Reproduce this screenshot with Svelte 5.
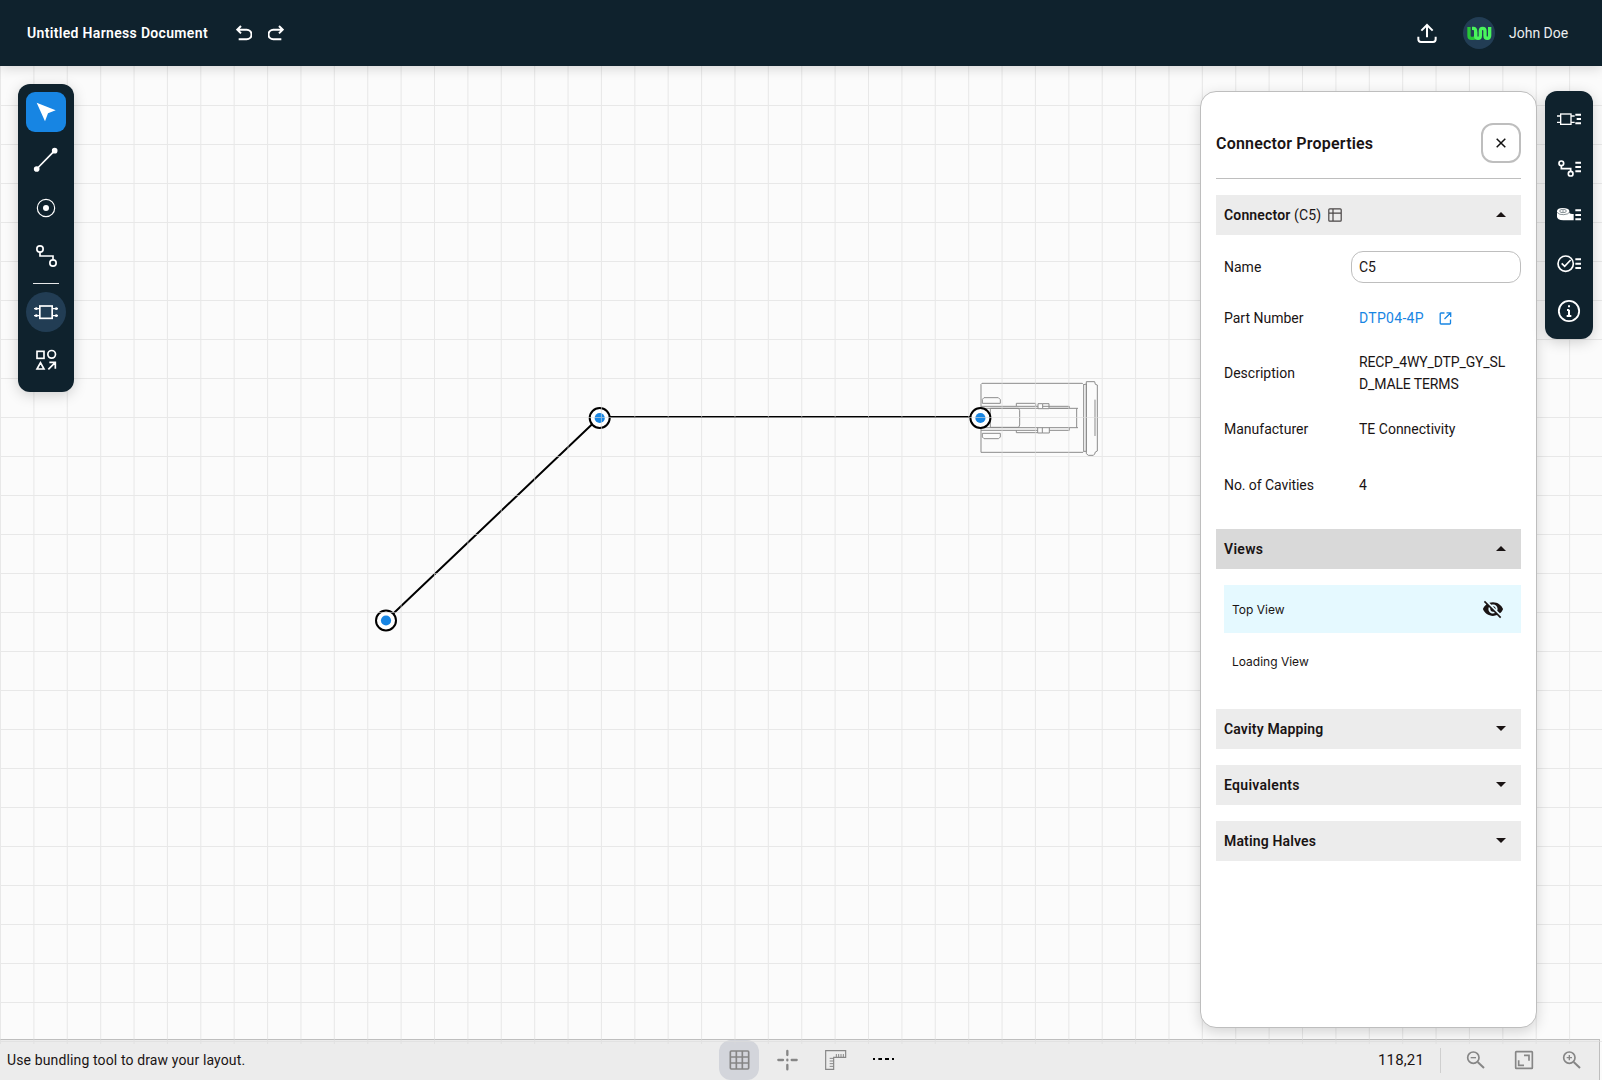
<script>
    let connectorName = "C5";
    let activeTool = "select";
    let selectedView = "Top View";

    const columns = Array.from({ length: 48 }, (_, i) => i * 33.385 + 0.5);
    const rows = Array.from({ length: 25 }, (_, i) => i * 39 + 39.5);
    const nodes = [
        { x: 386, y: 554.5 },
        { x: 599.7, y: 352 },
        { x: 980.4, y: 352 }
    ];
    const views = ["Top View", "Loading View"];
    const closedSections = [
        { title: "Cavity Mapping", kind: "cavity" },
        { title: "Equivalents", kind: "equivalents" },
        { title: "Mating Halves", kind: "mating" }
    ];
</script>

<div class="app">
    <header>
        <h1>Untitled Harness Document</h1>
        <button class="history" aria-label="Undo">
            <svg width="16" height="16" viewBox="0 0 48 48"><path d="M15 3L4 14l11 11M5 14h27a14.500 14.500 0 0 1 0 29H8" /></svg>
        </button>
        <button class="history" aria-label="Redo">
            <svg width="16" height="16" viewBox="0 0 48 48"><path d="M33 3l11 11-11 11M43 14H16a14.500 14.500 0 0 0 0 29h24" /></svg>
        </button>
        <button class="export" aria-label="Export">
            <svg width="20" height="20" viewBox="0 0 60 60"><path d="M30 43V6M13 23L30 6l17 17M4 41v8q0 8 8 8h36q8 0 8-8v-8" /></svg>
        </button>
        <svg class="avatar" width="32" height="32" viewBox="0 0 96 96">
            <circle cx="48" cy="48" r="48" fill="#223d54" />
            <path d="M18 30v26q0 8 8 8h4q8 0 8-8V45" stroke="#27c637" />
            <path d="M27 34h4q7 0 7 9v13q0 8 7 8t7-8V42q0-8 7-8t7 8v14q0 8 7 8t7-9V30" stroke="#49f55c" />
        </svg>
        <span class="user">John Doe</span>
    </header>

    <main>
        <svg class="canvas" width="1602" height="978" viewBox="0 0 1602 978">
            <g class="outline" transform="translate(960 304) scale(.33333)">
                <path d="M63 43l3-3h301l4 4v201l-2 2H63zM371 44l8-2v202h-8M379 35h25l2 8 6 2v198l-6 3-2 6-4 4h-15l-6-5zM405 89v109" />
                <path d="M67 88l5-5h43l6 6v11H67zM67 190h54v11l-5 5H72l-5-5z" />
                <path d="M63 109h171M63 115h171M248 109h80v6h-60M63 181h171M63 173h291M268 181h60v-8M91 115h85l3 7v43l-3 7H91zM354 115h-86M350 115v58" />
                <path d="M169 108v-8h58v8M169 181v7h64M234 101h14v15h-14zM248 101h19v15h-19M233 173v16h14v-16M247 189h21v-16" />
            </g>
            <path class="wire" d="M386 554.500L599.700 351H980" />
            {#each nodes as node}
                <circle class="node" cx={node.x} cy={node.y} r="10" />
                <circle cx={node.x} cy={node.y} r="5.100" fill="#1785e3" />
            {/each}
            <g class="grid">
                {#each columns as x}
                    <line x1={x} x2={x} y1="0" y2="978" />
                {/each}
                {#each rows as y}
                    <line x1="0" x2="1602" y1={y} y2={y} />
                {/each}
            </g>
        </svg>

        <nav class="tools">
            <button class:active={activeTool === "select"} on:click={() => activeTool = "select"} aria-label="Select">
                <svg viewBox="0 0 120 120"><path class="solid" d="M32 32l57 23-23 9-9 24z" /></svg>
            </button>
            <button aria-label="Line">
                <svg viewBox="0 0 120 120"><path d="M32 87l54-55" /><circle class="solid" cx="32" cy="87" r="8.500" /><circle class="solid" cx="86" cy="32" r="8.500" /></svg>
            </button>
            <button aria-label="Node">
                <svg viewBox="0 0 120 120"><circle cx="60" cy="60" r="26" stroke-width="3.500" /><circle class="solid" cx="60" cy="60" r="9" /></svg>
            </button>
            <button aria-label="Bundle">
                <svg viewBox="0 0 120 120"><path d="M42 49v11h39v11" /><circle cx="42" cy="39" r="9.500" /><circle cx="81" cy="81" r="9.500" /></svg>
            </button>
            <hr />
            <button class="round" aria-label="Connector">
                <svg viewBox="0 0 120 120">
                    <rect x="41.500" y="42" width="37" height="37" />
                    <path stroke-width="3.500" d="M24 50h17M24 71h17M79 50h17M79 71h17" />
                    <g class="solid"><circle cx="31" cy="50" r="4" /><circle cx="31" cy="71" r="4" /><circle cx="91" cy="50" r="4" /><circle cx="91" cy="71" r="4" /></g>
                </svg>
            </button>
            <button aria-label="Components">
                <svg viewBox="0 0 120 120"><rect x="33" y="34" width="21" height="21" /><circle cx="77" cy="43" r="11.500" /><path d="M43.500 68L33 87h21zM67 88l21-21M70 67h18v19" /></svg>
            </button>
        </nav>

        <section class="panel">
            <div class="panel-head">
                <h2>Connector Properties</h2>
                <button class="close" aria-label="Close"><svg width="10" height="10" viewBox="0 0 10 10"><path d="M.7.700l8.600 8.600M9.300.7L.7 9.300" /></svg></button>
            </div>

            <div class="section-head">
                <h3 class="connector">Connector <span>(C5)</span></h3>
                <svg class="table" width="14" height="14" viewBox="0 0 14 14"><rect x=".8" y=".8" width="12.400" height="12.400" rx="1" /><path d="M5 1v12M1 5.200h12" /></svg>
                <svg class="caret" width="10" height="5" viewBox="0 0 10 5"><path d="M0 5l5-5 5 5z" /></svg>
            </div>
            <dl>
                <dt>Name</dt>
                <dd class="field"><input bind:value={connectorName} /></dd>
                <dt>Part Number</dt>
                <dd class="link">
                    <span class="part">DTP04-4P</span>
                    <svg width="13" height="13" viewBox="0 0 12 13"><path d="M5 1H1.500Q.7 1 .7 1.800v9.400q0 .8.800.800h8.700q.8 0 .8-.8V7.500M7 .8h4.200V5M11 1L5 7" /></svg>
                </dd>
                <dt>Description</dt>
                <dd class="desc">RECP_4WY_DTP_GY_SLD_MALE TERMS</dd>
                <dt>Manufacturer</dt>
                <dd>TE Connectivity</dd>
                <dt class="cavities">No. of Cavities</dt>
                <dd>4</dd>
            </dl>

            <div class="section-head dark">
                <h3>Views</h3>
                <svg class="caret" width="10" height="5" viewBox="0 0 10 5"><path d="M0 5l5-5 5 5z" /></svg>
            </div>
            <ul>
                {#each views as view}
                    <li class:selected={view === selectedView}>
                        {view}
                        {#if view === selectedView}
                            <svg width="22" height="22" viewBox="0 0 24 24"><path d="M12 7c2.760 0 5 2.240 5 5 0 .65-.13 1.260-.36 1.830l2.920 2.920c1.510-1.260 2.700-2.890 3.430-4.750-1.730-4.390-6-7.500-11-7.500-1.400 0-2.740.25-3.980.7l2.160 2.160C10.740 7.130 11.350 7 12 7zM2 4.270l2.280 2.280.46.460C3.080 8.300 1.780 10.020 1 12c1.730 4.390 6 7.500 11 7.500 1.550 0 3.030-.3 4.380-.84l.42.420L19.730 22 21 20.730 3.270 3 2 4.270zM7.530 9.800l1.550 1.550c-.05.210-.08.430-.08.650 0 1.660 1.340 3 3 3 .22 0 .44-.03.650-.08l1.550 1.550c-.67.330-1.410.530-2.200.530-2.760 0-5-2.240-5-5 0-.79.2-1.530.53-2.200zm4.310-.78l3.150 3.150.02-.16c0-1.660-1.340-3-3-3l-.17.010z" /></svg>
                        {/if}
                    </li>
                {/each}
            </ul>

            {#each closedSections as section}
                <div class="section-head closed {section.kind}">
                    <h3>{section.title}</h3>
                    <svg class="caret" width="10" height="5" viewBox="0 0 10 5"><path d="M0 0l5 5 5-5z" /></svg>
                </div>
            {/each}
        </section>

        <nav class="lists">
            <button aria-label="Connector list">
                <svg viewBox="0 0 120 120">
                    <rect x="35" y="45" width="31" height="31" stroke-width="4" />
                    <path stroke-width="4" d="M24 51h11M24 70h11M66 51h11M66 70h11" />
                    <path stroke-width="6" d="M79 47h17M83 60h13M79 73h17" />
                </svg>
            </button>
            <button aria-label="Bundle list">
                <svg viewBox="0 0 120 120"><path d="M37 56v9h28v8" /><circle cx="37" cy="49" r="7" /><circle cx="65" cy="80" r="7" /><path stroke-width="6" d="M79 47h17M79 60h17M79 73h17" /></svg>
            </button>
            <button aria-label="Covering list">
                <svg viewBox="0 0 120 120">
                    <path class="solid" d="M24 48q1-9 17-9 18 0 20 8v7q4 4 13 3v19H43q-19-2-19-11z" />
                    <path class="cut" d="M24 52q7 8 20 7 14-1 17-7M32 48q0-5 10-5t10 5-10 5-10-5zM39 48h6" />
                    <path stroke-width="6" d="M79 46h17M79 60h17M79 73h17" />
                </svg>
            </button>
            <button aria-label="Validation">
                <svg viewBox="0 0 120 120"><circle cx="50" cy="62" r="23" /><path d="M38 61l9 9 18-19" /><path stroke-width="6" d="M79 49h17M79 62h17M79 75h17" /></svg>
            </button>
            <button aria-label="Info">
                <svg viewBox="0 0 120 120"><circle cx="60" cy="60" r="30.500" stroke-width="5.500" /><path stroke-width="6" d="M60 43v6M60 56v20M54 57h6M53 75h14" /></svg>
            </button>
        </nav>
    </main>

    <footer>
        <p>Use bundling tool to draw your layout.</p>
        <button class="on" aria-label="Grid">
            <svg viewBox="0 0 120 120"><rect x="34" y="33" width="55" height="54" rx="3" /><path d="M52 33v54M70 33v54M34 51h55M34 69h55" /></svg>
        </button>
        <button aria-label="Crosshair">
            <svg viewBox="0 0 120 120"><path stroke-width="7" stroke-linecap="round" d="M61 33v12M61 75v13M34 60h14M74 60h15M61 59v2" /></svg>
        </button>
        <button aria-label="Ruler">
            <svg viewBox="0 0 120 120"><path stroke-width="3.500" d="M32 32h60v20H56v36H32z" /><path stroke-width="3" d="M64 52V42M71 52V42M78 52V42M85 52V42M56 55H44M56 63H44M56 71H44M56 79H44" /></svg>
        </button>
        <button class="dashes" aria-label="Line style">
            <svg viewBox="0 0 120 120"><path stroke-width="6" d="M30 57h6M46 57h11M66 57h12M87 57h6" /></svg>
        </button>
        <span class="coords">118,21</span>
        <button aria-label="Zoom out">
            <svg viewBox="0 0 120 120"><circle cx="52" cy="53" r="17" /><path stroke-width="6" d="M65 66l19 18" /><path stroke-width="4" d="M44 53h16" /></svg>
        </button>
        <button aria-label="Fit to screen">
            <svg viewBox="0 0 120 120"><rect x="35" y="35" width="50" height="50" rx="2" stroke-width="5" /><path d="M60 46h15v16M44 61v15h16" /></svg>
        </button>
        <button aria-label="Zoom in">
            <svg viewBox="0 0 120 120"><circle cx="52" cy="53" r="17" /><path stroke-width="6" d="M65 66l19 18" /><path stroke-width="4" d="M44 53h16M52 45v16" /></svg>
        </button>
    </footer>
</div>

<style>
:global(body) {
    overflow: hidden;
    background: #fbfbfb;
}
* {
    box-sizing: border-box;
}
.app {
    height: 1080px;
    display: flex;
    flex-direction: column;
    font-family: Roboto, "Liberation Sans", sans-serif;
    font-size: 14px;
    color: #1a1414;
}
h1, h2, h3, p, dl, dd, ul {
    margin: 0;
    padding: 0;
}
h1, h2, h3 {
    font-weight: 600;
}
button {
    all: unset;
    display: flex;
    align-items: center;
    justify-content: center;
    cursor: pointer;
}
svg {
    fill: none;
    flex: none;
}
header {
    height: 66px;
    padding: 0 34px 0 27px;
    display: flex;
    align-items: center;
    background: #0f222d;
    color: white;
    box-shadow: 0 2px 12px rgba(0, 0, 0, .16);
    position: relative;
    z-index: 2;
}
header svg {
    stroke: white;
    stroke-width: 6;
}
h1 {
    width: 209px;
    padding-bottom: 1px;
    font-size: 14px;
    letter-spacing: .33px;
    white-space: nowrap;
}
.history {
    margin-right: 16px;
}
.export {
    margin-left: auto;
    margin-right: 26px;
}
header .avatar {
    stroke: none;
    stroke-width: 10;
}
.user {
    width: 59px;
    margin-left: 14px;
    white-space: nowrap;
    color: #eceef0;
}
main {
    height: 974px;
    display: flex;
    align-items: flex-start;
    position: relative;
    z-index: 1;
}
.canvas {
    position: absolute;
    top: 0;
    left: 0;
    pointer-events: none;
}
.outline {
    stroke: #8c8c8c;
    stroke-width: 3;
}
.wire {
    stroke: black;
    stroke-width: 2;
}
.node {
    fill: white;
    stroke: black;
    stroke-width: 2;
}
.grid {
    stroke: #dcdcdc;
    stroke-width: 1;
    opacity: .6;
}
nav {
    position: relative;
    background: #0f222d;
    border-radius: 12px;
    box-shadow: 0 3px 14px rgba(0, 0, 0, .18);
}
nav button {
    width: 40px;
    height: 40px;
    border-radius: 9px;
    margin-bottom: 8px;
}
nav svg, footer svg {
    width: 40px;
    height: 40px;
    stroke: white;
    stroke-width: 5;
}
nav .solid {
    fill: white;
    stroke: none;
}
.cut {
    stroke: #0f222d;
    stroke-width: 1.5;
}
.tools {
    width: 56px;
    height: 308px;
    margin: 18px 0 0 18px;
    padding: 8px;
}
.tools .active {
    background: #1785e3;
}
.tools .round {
    background: #223d54;
    border-radius: 50%;
}
.tools hr {
    width: 26px;
    height: 1px;
    margin: -1px auto 8px;
    border: none;
    background: #e6e8e9;
}
.lists {
    width: 48px;
    height: 248px;
    margin: 25px 9px 0 8px;
    padding: 8px 4px;
}
.panel {
    width: 337px;
    height: 937px;
    margin: 25px 0 0 auto;
    padding: 16px 15px;
    position: relative;
    background: white;
    border: 1px solid #bebebe;
    border-radius: 16px;
    box-shadow: 0 4px 14px rgba(0, 0, 0, .16);
}
.panel-head {
    height: 71px;
    padding-top: 15px;
    margin-bottom: 16px;
    display: flex;
    align-items: flex-start;
    justify-content: space-between;
    border-bottom: 1px solid #bebebe;
}
h2 {
    font-size: 16px;
    line-height: 42px;
    letter-spacing: .2px;
}
.close {
    width: 40px;
    height: 40px;
    box-sizing: border-box;
    border: 2px solid #bebebe;
    border-radius: 12px;
}
.close svg {
    stroke: #111;
    stroke-width: 1.5;
}
.section-head {
    height: 40px;
    padding: 0 15px 0 8px;
    display: flex;
    align-items: center;
    background: #ececec;
}
.section-head.dark {
    background: #d9d9d9;
}
.section-head.closed {
    margin-bottom: 16px;
}
h3 {
    font-size: 14px;
    letter-spacing: .3px;
}
h3 span {
    font-weight: 400;
}
h3.connector {
    letter-spacing: .15px;
}
.cavity, .mating {
    letter-spacing: .15px;
}
.cavity h3, .mating h3 {
    letter-spacing: inherit;
}
.table {
    margin-left: 7px;
    stroke: #4a4646;
    stroke-width: 1.2;
}
.caret {
    margin-left: auto;
    margin-bottom: 1px;
    fill: #1a1414;
}
dl {
    height: 294px;
    padding: 16px 0 24px 8px;
    display: grid;
    grid-template-columns: 127px 170px;
    grid-template-rows: 32px 38px 40px 40px 40px;
    row-gap: 16px;
    align-items: center;
    line-height: 22px;
}
dt.cavities {
    letter-spacing: -.07px;
}
dd {
    padding-left: 8px;
}
dd.field {
    padding: 0;
}
input {
    display: block;
    width: 170px;
    height: 32px;
    padding: 0 7px;
    border: 1px solid #bebebe;
    border-radius: 12px;
    outline: none;
    background: white;
    color: inherit;
    font: inherit;
}
.link {
    display: flex;
    align-items: center;
    color: #1785e3;
}
.part {
    width: 80px;
    letter-spacing: .3px;
}
.link svg {
    stroke: #1785e3;
    stroke-width: 1.3;
}
dd.desc {
    padding-right: 10px;
    word-break: break-all;
    letter-spacing: -.13px;
}
ul {
    height: 140px;
    padding: 16px 0 0 8px;
    list-style: none;
    font-family: Inter, sans-serif;
    font-size: 12px;
}
li {
    height: 48px;
    margin-bottom: 4px;
    padding: 0 17px 0 8px;
    display: flex;
    align-items: center;
    justify-content: space-between;
}
.selected {
    background: #e5f9ff;
}
li svg {
    fill: #1a1414;
}
footer {
    width: 1600px;
    height: 41px;
    margin-top: -1px;
    padding-right: 7px;
    display: flex;
    align-items: center;
    background: #ececec;
    border-top: 1px solid #bebebe;
    border-right: 1px solid #bebebe;
}
footer p {
    width: 719px;
    padding-left: 7px;
    letter-spacing: .13px;
}
footer button {
    width: 40px;
    height: 40px;
    margin-right: 8px;
    border-radius: 12px;
}
footer button:last-child {
    margin-right: 0;
}
footer svg {
    stroke: #868686;
}
footer .on {
    background: #d3d5db;
}
footer .dashes svg {
    stroke: black;
}
.coords {
    width: 63px;
    height: 25px;
    margin-left: auto;
    margin-right: 15px;
    line-height: 25px;
    font-size: 15px;
    letter-spacing: .15px;
    border-right: 1px solid #cfcfcf;
}
</style>
